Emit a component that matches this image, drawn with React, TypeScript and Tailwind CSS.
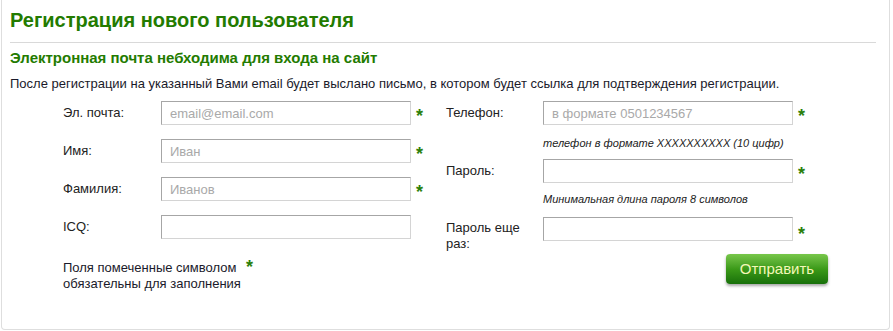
const font = { fontFamily: '"Liberation Sans", Arial, sans-serif' };

function Star({ className = "" }: { className?: string }) {
  return (
    <span className={`text-[18px] font-bold leading-none text-[#2b7f0a] ${className}`}>*</span>
  );
}

function Field({ placeholder = "" }: { placeholder?: string }) {
  return (
    <input
      placeholder={placeholder}
      className="h-6 w-[250px] shrink-0 border border-t-[#a6a6a6] border-l-[#a6a6a6] border-r-[#d4d4d4] border-b-[#d4d4d4] bg-white px-2 text-[13px] text-[#333] placeholder:text-[#a9a9a9] outline-none"
    />
  );
}

function LeftRow({ label, placeholder, required }: { label: string; placeholder?: string; required?: boolean }) {
  return (
    <div className="flex h-6 items-center">
      <span className="w-[98px] shrink-0 text-[13px] text-[#222]">{label}</span>
      <Field placeholder={placeholder} />
      {required && <Star className="ml-[5px] mt-[5px]" />}
    </div>
  );
}

export default function App() {
  return (
    <div className="w-[893px] h-[331px] bg-white" style={font}>
      <div className="ml-px w-[889px] h-[330px] border-x border-b border-[#dedede] rounded-b-[4px] pl-2 pr-2">
        <h1 className="pt-[8px] text-[20px] font-bold leading-[24px] text-[#237b00]">
          Регистрация нового пользователя
        </h1>
        <div className="mt-[10px] mr-[5px] h-px bg-[#d9d9d9]" />
        <h2 className="mt-[6px] text-[15px] font-bold leading-[18px] text-[#237b00]">
          Электронная почта небходима для входа на сайт
        </h2>
        <p className="mt-[9px] text-[13px] leading-[16px] text-[#1a1a2a]">
          После регистрации на указанный Вами email будет выслано письмо, в котором будет ссылка для подтверждения регистрации.
        </p>

        <div className="mt-[9px] ml-[53px] flex">
          <div className="w-[383px] shrink-0">
            <div className="flex flex-col gap-[14px]">
              <LeftRow label="Эл. почта:" placeholder="email@email.com" required />
              <LeftRow label="Имя:" placeholder="Иван" required />
              <LeftRow label="Фамилия:" placeholder="Иванов" required />
              <LeftRow label="ICQ:" />
            </div>
            <div className="mt-[21px] flex items-start">
              <p className="w-[183px] text-[13px] leading-[16px] text-[#1a1a2a]">
                Поля помеченные символом обязательны для заполнения
              </p>
              <Star className="ml-[0px] -mt-[2px]" />
            </div>
          </div>

          <div className="w-[420px] shrink-0">
            <div className="flex h-6 items-center">
              <span className="w-[97px] shrink-0 text-[13px] text-[#222]">Телефон:</span>
              <Field placeholder="в формате 0501234567" />
              <Star className="ml-[5px] mt-[5px]" />
            </div>
            <p className="ml-[97px] mt-[11px] text-[11px] italic leading-[14px] text-[#222]">
              телефон в формате XXXXXXXXXX (10 цифр)
            </p>
            <div className="mt-[9px] flex h-6 items-center">
              <span className="w-[97px] shrink-0 text-[13px] text-[#222]">Пароль:</span>
              <Field />
              <Star className="ml-[5px] mt-[5px]" />
            </div>
            <p className="ml-[97px] mt-[9px] text-[11px] italic leading-[14px] text-[#222]">
              Минимальная длина пароля 8 символов
            </p>
            <div className="mt-[11px] flex items-start">
              <span className="w-[97px] shrink-0 pt-[3px] text-[13px] leading-[16px] text-[#222]">
                Пароль еще
                <br />
                раз:
              </span>
              <Field />
              <Star className="ml-[5px] mt-[8px]" />
            </div>
            <div className="mt-[2px] ml-[280px]">
              <button className="h-[30px] w-[102px] rounded-[4px] bg-gradient-to-b from-[#78c74a] via-[#3b9a18] to-[#17700a] text-[15px] text-[#f4f7b8] shadow-[0_2px_3px_rgba(0,0,0,0.35)]">
                Отправить
              </button>
            </div>
          </div>
        </div>
      </div>
    </div>
  );
}
